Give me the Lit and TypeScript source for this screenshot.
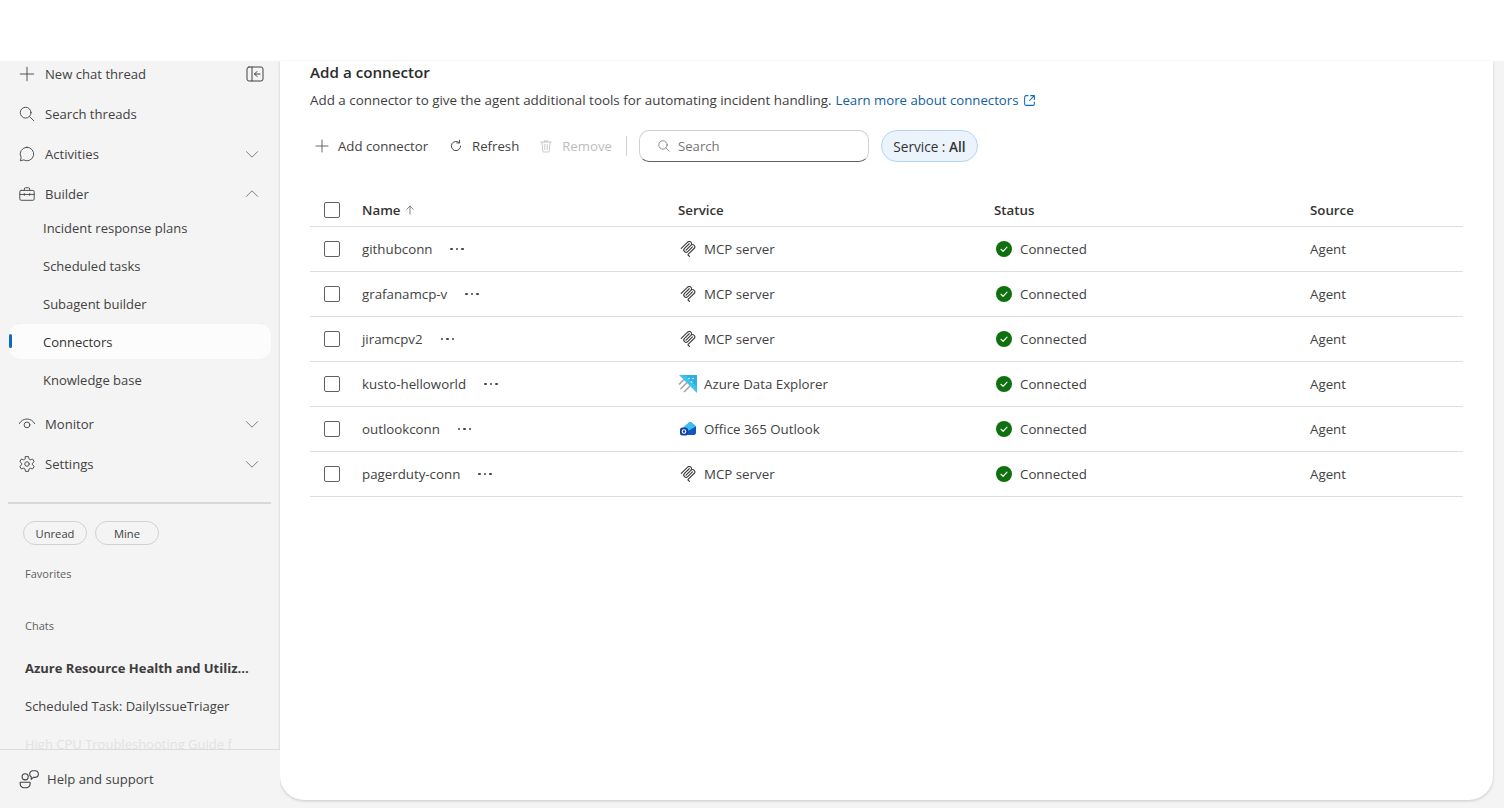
import { LitElement, css, html, svg } from "lit";
import { customElement } from "lit/decorators.js";

const ic = (body: unknown, size = 18, box = 20, sw = 1) =>
  html`<svg class="ic" width=${size} height=${size} viewBox="0 0 ${box} ${box}" fill="none" stroke="currentColor" stroke-width=${sw} stroke-linecap="round" stroke-linejoin="round">${body}</svg>`;

const plus = svg`<path d="M10 2.5v15M2.5 10h15"/>`;
const search = svg`<circle cx="8.5" cy="8.5" r="6"/><path d="M13 13l4.5 4.5"/>`;
const chat = svg`<path d="M10 2.5a7.5 7.5 0 1 1-3.6 14.1L2.6 17.5l.9-3.7A7.5 7.5 0 0 1 10 2.5z"/>`;
const briefcase = svg`<path d="M7 6V4.5A1.5 1.5 0 0 1 8.5 3h3A1.5 1.5 0 0 1 13 4.5V6"/><rect x="2" y="6" width="16" height="11" rx="1.5"/><path d="M2 10.5h16M7 9.5v2M13 9.5v2"/>`;
const eye = svg`<path d="M1.5 9.5C3.5 6 6.5 4.5 10 4.5s6.5 1.5 8.5 5"/><circle cx="10" cy="11" r="3.2"/>`;
const gear = svg`<circle cx="10" cy="10" r="2.5"/><path d="M8.3 1.8h3.4l.5 2.6 1.6.9 2.5-.8 1.7 2.9-2 1.7v1.8l2 1.7-1.700 2.9-2.500-.8-1.600.9-.5 2.600H8.300l-.5-2.600-1.600-.9-2.500.8-1.700-2.900 2-1.700V9.100l-2-1.700 1.700-2.900 2.500.8 1.600-.9z"/>`;
const help = svg`<circle cx="6.5" cy="8" r="2.8"/><path d="M2 13h9v1.500a3.500 3.500 0 0 1-3.500 3.500h-2A3.500 3.500 0 0 1 2 14.500z"/><path d="M13 2.500h2.500a3 3 0 0 1 0 6H14l-2 1.800V8a3 3 0 0 1 1-5.500z"/>`;
const refresh = svg`<path d="M15.800 10a5.800 5.800 0 1 1-1.900-4.300"/><path d="M14.500 2.800v3.400h-3.400"/>`;
const trash = svg`<path d="M3.500 5h13M8 5V3.500h4V5M5 5l.8 11a1.500 1.500 0 0 0 1.500 1.500h5.400a1.500 1.500 0 0 0 1.500-1.500L15 5M8.500 8v6.500M11.500 8v6.500"/>`;
const arrowUp = svg`<path d="M10 17V3.500M4.500 9L10 3.500 15.500 9"/>`;
const chevDown = svg`<path d="M3 7l7 7 7-7"/>`;
const chevUp = svg`<path d="M3 13l7-7 7 7"/>`;
const panel = svg`<rect x="2" y="3" width="16" height="14" rx="2"/><path d="M7 3v14M15 10H9.500M12 7.500L9.500 10l2.500 2.500"/>`;
const external = svg`<path d="M8 3.500H5.500a2 2 0 0 0-2 2v9a2 2 0 0 0 2 2h9a2 2 0 0 0 2-2V12"/><path d="M11.500 3.500h5v5M16.500 3.500L10 10"/>`;

const mcpIcon = html`<svg width="16" height="16" viewBox="0 0 24 24" fill="#3f3f3f"><path d="M15.688 2.343a2.588 2.588 0 00-3.61 0l-9.626 9.44a.863.863 0 01-1.203 0 .823.823 0 010-1.18l9.626-9.44a4.313 4.313 0 016.016 0 4.116 4.116 0 011.204 3.54 4.3 4.3 0 013.609 1.18l.05.05a4.115 4.115 0 010 5.9l-8.706 8.537a.274.274 0 000 .393l1.788 1.754a.823.823 0 010 1.18.863.863 0 01-1.203 0l-1.788-1.753a1.92 1.92 0 010-2.754l8.706-8.538a2.47 2.47 0 000-3.54l-.05-.049a2.588 2.588 0 00-3.607-.003l-7.172 7.034-.002.002-.098.097a.863.863 0 01-1.204 0 .823.823 0 010-1.18l7.273-7.133a2.47 2.47 0 00-.003-3.537z"/><path d="M14.485 4.703a.823.823 0 000-1.18.863.863 0 00-1.204 0l-7.119 6.982a4.115 4.115 0 000 5.9 4.314 4.314 0 006.016 0l7.12-6.982a.823.823 0 000-1.18.863.863 0 00-1.204 0l-7.119 6.982a2.588 2.588 0 01-3.61 0 2.47 2.47 0 010-3.54l7.12-6.982z"/></svg>`;

const adxIcon = html`<svg width="20" height="20" viewBox="0 0 20 20"><path d="M1 1h18v18z" fill="#3cc4ee"/><path d="M7 1h12v12z" fill="#2a9fe0" opacity=".6"/><circle cx="11" cy="4.5" r=".8" fill="#e4f8ff"/><circle cx="15" cy="4.5" r=".8" fill="#e4f8ff"/><circle cx="13.500" cy="8" r=".8" fill="#e4f8ff"/><path d="M1 10.500l5-5M2.500 15L9 8.500M6 18l6-6" stroke="#a6a6a6" stroke-width="1.600"/></svg>`;

const outlookIcon = html`<svg width="18" height="18" viewBox="0 0 18 18"><path d="M4.500 7.500 10 2.500a2 2 0 0 1 2.600 0L17 6.500V12a3 3 0 0 1-3 3H7.500a3 3 0 0 1-3-3z" fill="#1b74d8"/><path d="M4.500 7.500 10 2.500a2 2 0 0 1 2.600 0L17 6.500l-6.500 4.300z" fill="#3fbdf5"/><path d="M9 11l8-4.500V12a3 3 0 0 1-3 3H9z" fill="#1257bd"/><rect x="1" y="7.500" width="8" height="8" rx="2.500" fill="#0f43a6"/><circle cx="5" cy="11.500" r="1.800" fill="none" stroke="#fff" stroke-width="1.100"/></svg>`;

const rows = [
  { name: "githubconn", service: "MCP server", icon: mcpIcon },
  { name: "grafanamcp-v", service: "MCP server", icon: mcpIcon },
  { name: "jiramcpv2", service: "MCP server", icon: mcpIcon },
  { name: "kusto-helloworld", service: "Azure Data Explorer", icon: adxIcon },
  { name: "outlookconn", service: "Office 365 Outlook", icon: outlookIcon },
  { name: "pagerduty-conn", service: "MCP server", icon: mcpIcon },
];

@customElement("app-root")
export class AppRoot extends LitElement {
  static override styles = css`
    :host {
      display: block;
      height: 808px;
      overflow: hidden;
      background: #fff;
      color: #424242;
      font-family: "Open Sans", "Noto Sans", sans-serif;
      font-size: 13.1px;
    }
    .top {
      height: 61px;
    }
    .shell {
      display: flex;
      height: 747px;
      background: #f4f4f4;
    }
    .ic {
      flex: none;
      display: block;
    }

    /* sidebar */
    .side {
      width: 280px;
      flex: none;
      display: flex;
      flex-direction: column;
      position: relative;
    }
    .item {
      height: 40px;
      margin-top: -7px;
      margin-bottom: 7px;
      display: flex;
      align-items: center;
      padding: 0 20px 0 18px;
      gap: 9px;
    }
    .item span {
      flex: 1;
    }
    .item .chev {
      color: #616161;
    }
    .panel {
      margin-right: -5px;
    }
    .subs {
      margin-top: -12px;
      margin-bottom: 12px;
    }
    .sub {
      height: 38px;
      box-sizing: border-box;
      display: flex;
      align-items: center;
      margin: 0 9px;
      padding-left: 34px;
      border-radius: 10px;
      font-size: 13px;
      position: relative;
    }
    .sub.active {
      background: #fcfcfc;
      box-shadow: 0 0 1px rgba(0, 0, 0, 0.08);
      color: #333;
      height: 35px;
      margin-top: 1px;
      margin-bottom: 2px;
    }
    .sub.active::before {
      content: "";
      position: absolute;
      left: 0;
      top: 10px;
      width: 3px;
      height: 14px;
      border-radius: 2px;
      background: #0f6cbd;
    }
    .rule {
      height: 2px;
      background: #d8d8d8;
      margin: 11px 9px 0 8px;
    }
    .chips {
      display: flex;
      gap: 8px;
      padding: 17px 0 0 23px;
    }
    .chip {
      height: 24px;
      box-sizing: border-box;
      width: 64px;
      border: 1px solid #d1d1d1;
      border-radius: 12px;
      display: flex;
      align-items: center;
      justify-content: center;
      font-size: 11.2px;
    }
    .label {
      font-size: 11px;
      color: #616161;
      padding-left: 25px;
      height: 16px;
      line-height: 16px;
    }
    .fav {
      margin-top: 21px;
    }
    .chats {
      margin-top: 36px;
    }
    .thread {
      padding-left: 25px;
      height: 38px;
      line-height: 38px;
      font-size: 13px;
      white-space: nowrap;
    }
    .thread.bold {
      font-weight: 700;
      margin-top: 15px;
      color: #3d3d3d;
    }
    .thread.fade {
      color: #e2e2e2;
    }
    .foot {
      position: absolute;
      left: 0;
      right: 0;
      bottom: 0;
      height: 58px;
      background: #f4f4f4;
      border-top: 1px solid #dcdcdc;
      display: flex;
      align-items: center;
      gap: 7px;
      padding-left: 18px;
    }

    /* main card */
    .main {
      flex: 1;
      background: #fff;
      margin: 0 11px 8px 0;
      border-radius: 0 0 24px 24px;
      box-shadow: 0 1px 3px rgba(0, 0, 0, 0.18);
      padding: 0 30px;
    }
    h1 {
      margin: 0;
      font-size: 15.2px;
      line-height: 23px;
      font-weight: 600;
      color: #2b2b2b;
    }
    .desc {
      margin-top: 4px;
      line-height: 24px;
      font-size: 13.4px;
      color: #3d3d3d;
      display: flex;
      align-items: center;
      gap: 4px;
      white-space: nowrap;
    }
    .desc a {
      color: #115ea3;
      font-size: 13.2px;
    }
    .desc .ic {
      color: #0f6cbd;
    }
    .bar {
      display: flex;
      align-items: center;
      height: 32px;
      margin-top: 18px;
    }
    .tb {
      display: flex;
      align-items: center;
      gap: 8px;
      padding-left: 4px;
      margin-right: 16px;
      font-size: 13.2px;
    }
    .tb.refresh {
      margin-right: 15px;
    }
    .tb.off {
      color: #bdbdbd;
      margin-right: 14px;
    }
    .sep {
      width: 1px;
      height: 20px;
      background: #d1d1d1;
      margin-right: 12px;
    }
    .search {
      width: 230px;
      height: 32px;
      box-sizing: border-box;
      border: 1px solid #d1d1d1;
      border-bottom-color: #616161;
      border-radius: 10px;
      display: flex;
      align-items: center;
      gap: 7px;
      padding-left: 17px;
      color: #757575;
      font-size: 13.2px;
    }
    .search .ic {
      color: #616161;
    }
    .pill {
      height: 32px;
      box-sizing: border-box;
      margin-left: 12px;
      width: 97px;
      border: 1px solid #b4d6fa;
      border-radius: 16px;
      background: #ebf3fc;
      display: flex;
      align-items: center;
      justify-content: center;
      white-space: pre;
      font-size: 13.6px;
      color: #333;
    }
    .pill b {
      font-weight: 600;
    }
    .table {
      margin-top: 31px;
    }
    .row {
      display: grid;
      grid-template-columns: 52px 316px 316px 316px 1fr;
      align-items: center;
      height: 45px;
      box-sizing: border-box;
      border-bottom: 1px solid #dedede;
      font-size: 13.3px;
    }
    .row.head {
      height: 34px;
      font-weight: 600;
      color: #333;
    }
    .box {
      width: 16px;
      height: 16px;
      box-sizing: border-box;
      border: 1px solid #616161;
      border-radius: 2px;
      margin-left: 14px;
    }
    .cell {
      display: flex;
      align-items: center;
      white-space: nowrap;
    }
    .head .cell .ic {
      margin-left: 4px;
      color: #616161;
    }
    .dots {
      margin-left: 18px;
      display: flex;
      gap: 3px;
    }
    .dots i {
      width: 2.5px;
      height: 2.5px;
      border-radius: 50%;
      background: #424242;
    }
    .svc-ic {
      width: 20px;
      height: 20px;
      margin-right: 6px;
      display: flex;
      align-items: center;
      justify-content: center;
    }
    .ok {
      width: 16px;
      height: 16px;
      margin: 0 8px 0 2px;
    }
  `;

  private navItem(icon: unknown, label: string, chev?: unknown) {
    return html`<div class="item">
      ${ic(icon)}<span>${label}</span>
      ${chev ? html`<div class="chev">${ic(chev, 16)}</div>` : ""}
    </div>`;
  }

  override render() {
    return html`
      <div class="top"></div>
      <div class="shell">
        <aside class="side">
          <div class="nav">
            <div class="item">
              ${ic(plus)}<span>New chat thread</span>
              <div class="panel">${ic(panel, 20)}</div>
            </div>
            ${this.navItem(search, "Search threads")}
            ${this.navItem(chat, "Activities", chevDown)}
            ${this.navItem(briefcase, "Builder", chevUp)}
            <div class="subs">
              <div class="sub">Incident response plans</div>
              <div class="sub">Scheduled tasks</div>
              <div class="sub">Subagent builder</div>
              <div class="sub active">Connectors</div>
              <div class="sub">Knowledge base</div>
            </div>
            ${this.navItem(eye, "Monitor", chevDown)}
            ${this.navItem(gear, "Settings", chevDown)}
          </div>
          <div class="rule"></div>
          <div class="chips">
            <div class="chip">Unread</div>
            <div class="chip">Mine</div>
          </div>
          <div class="label fav">Favorites</div>
          <div class="label chats">Chats</div>
          <div class="thread bold">Azure Resource Health and Utiliz...</div>
          <div class="thread">Scheduled Task: DailyIssueTriager</div>
          <div class="thread fade">High CPU Troubleshooting Guide f</div>
          <div class="foot">${ic(help, 22)}<span>Help and support</span></div>
        </aside>
        <main class="main">
          <h1>Add a connector</h1>
          <div class="desc">
            <span>Add a connector to give the agent additional tools for automating incident handling.</span>
            <a>Learn more about connectors</a>${ic(external, 15, 20, 1.4)}
          </div>
          <div class="bar">
            <div class="tb">${ic(plus, 16)}Add connector</div>
            <div class="tb refresh">${ic(refresh, 16, 20, 1.2)}Refresh</div>
            <div class="tb off">${ic(trash, 16)}Remove</div>
            <div class="sep"></div>
            <div class="search">${ic(search, 14)}Search</div>
            <div class="pill">Service : <b>All</b></div>
          </div>
          <div class="table">
            <div class="row head">
              <div class="box"></div>
              <div class="cell">Name${ic(arrowUp, 12, 20, 1.3)}</div>
              <div class="cell">Service</div>
              <div class="cell">Status</div>
              <div class="cell">Source</div>
            </div>
            ${rows.map(
              (r) => html`<div class="row">
                <div class="box"></div>
                <div class="cell">${r.name}<div class="dots"><i></i><i></i><i></i></div></div>
                <div class="cell"><div class="svc-ic">${r.icon}</div>${r.service}</div>
                <div class="cell">
                  <svg class="ok" viewBox="0 0 16 16"><circle cx="8" cy="8" r="8" fill="#0e700e"/><path d="M5 8.3l2.1 2L11 6.2" fill="none" stroke="#fff" stroke-width="1.2" stroke-linecap="round" stroke-linejoin="round"/></svg>
                  Connected
                </div>
                <div class="cell">Agent</div>
              </div>`
            )}
          </div>
        </main>
      </div>
    `;
  }
}
